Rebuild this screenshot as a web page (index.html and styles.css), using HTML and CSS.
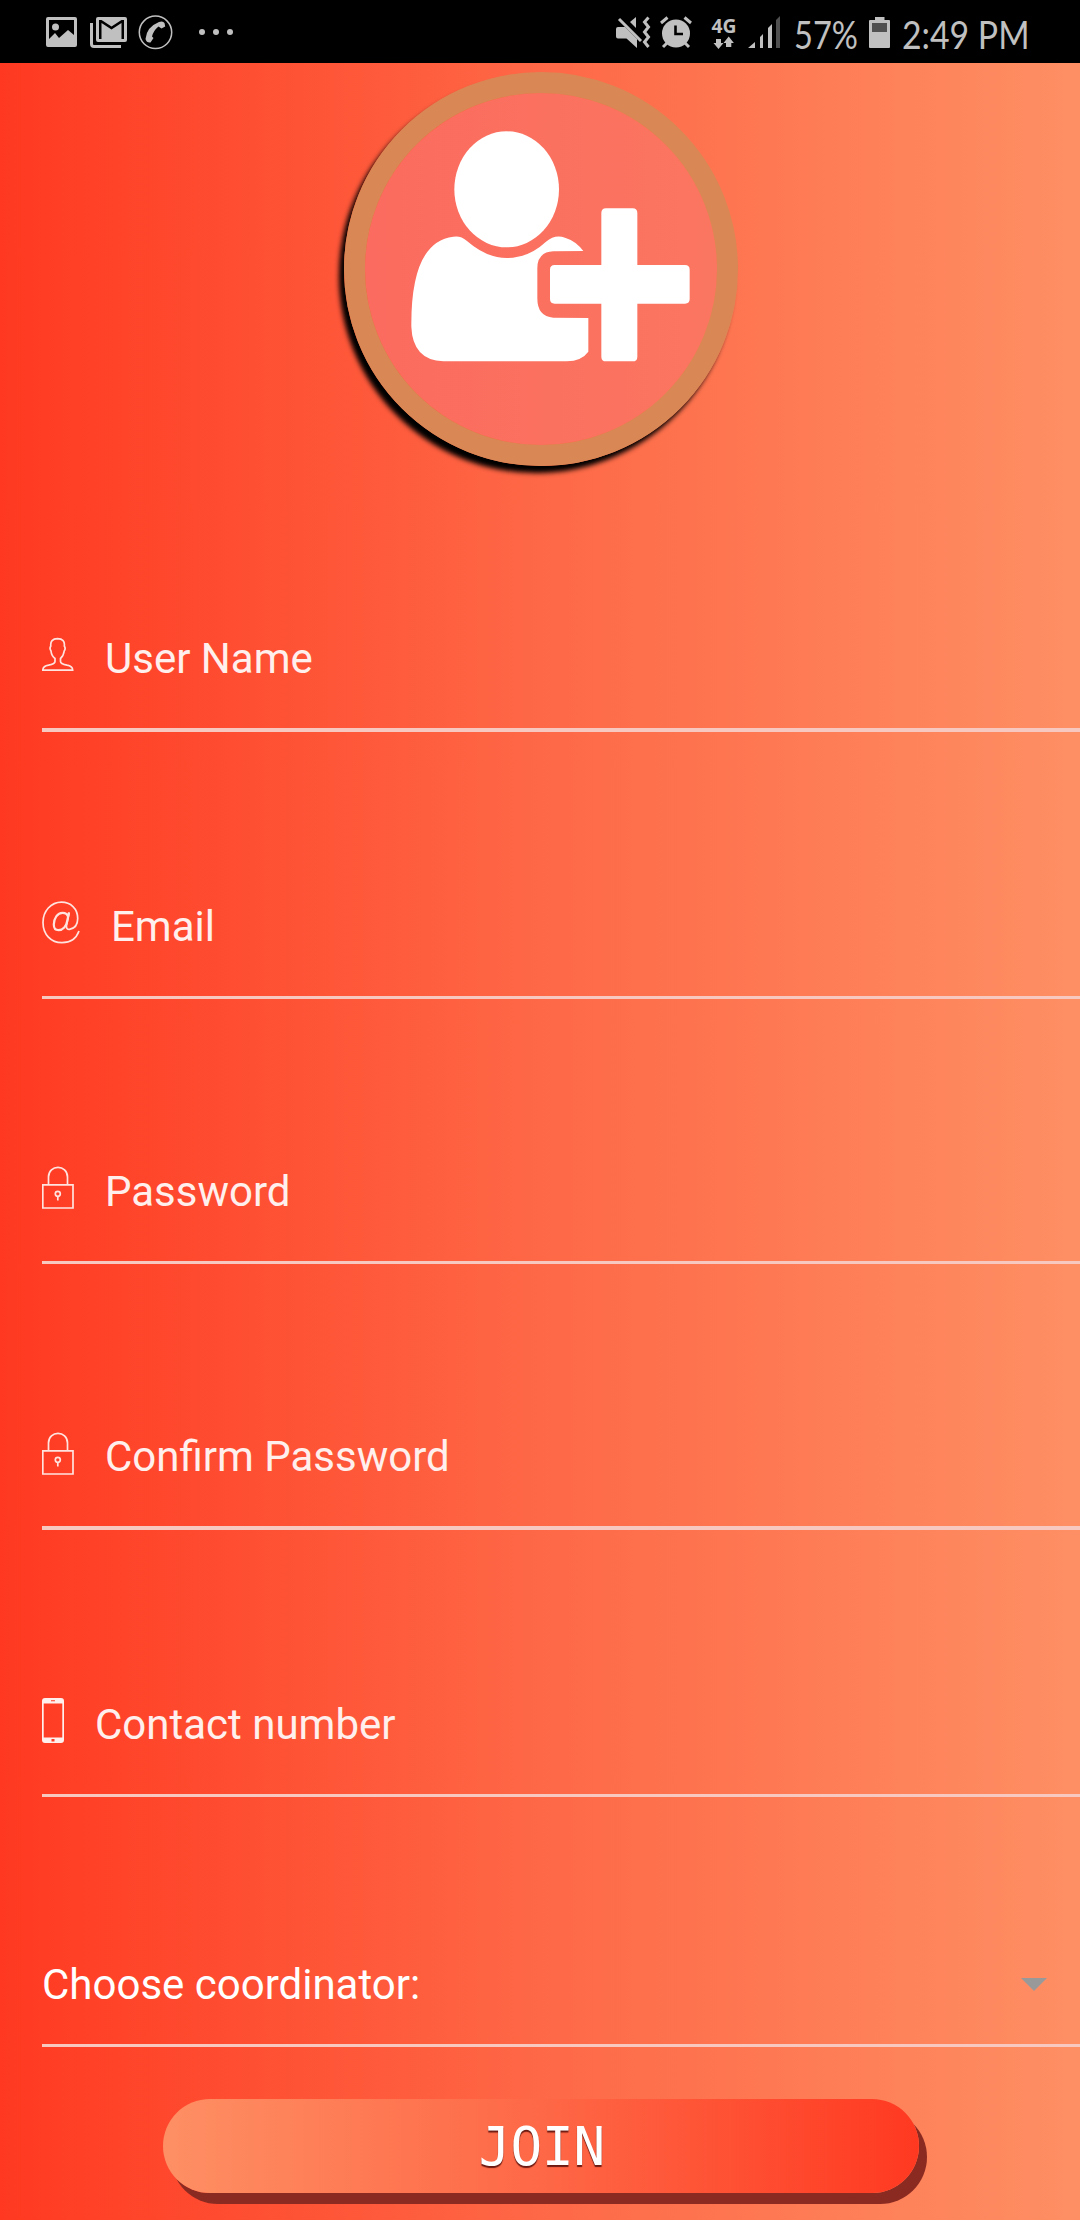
FILE: index.html
```html
<!DOCTYPE html>
<html lang="en">
<head>
<meta charset="utf-8">
<title>Join</title>
<link rel="stylesheet" href="styles.css">
</head>
<body>
<header class="status">
  <div class="status-group">
    <svg class="s-picture" width="31" height="35" viewBox="46 15 31 35"><path fill="#c0c0c0" fill-rule="evenodd" d="M48 17h27q2 0 2 2v26q0 2-2 2H48q-2 0-2-2V19q0-2 2-2zM49 20v19l6-6 4 5 9-8 6 5V20z"/><circle cx="55.500" cy="27" r="3.500" fill="#c0c0c0"/></svg>
    <svg class="s-mail" width="37" height="35" viewBox="90 15 37 35"><path fill="#c0c0c0" fill-rule="evenodd" d="M98 17h27q2 0 2 2v21q0 2-2 2H98q-2 0-2-2V19q0-2 2-2zM99 20v19h2.500V23l10 6.500 10-6.500v16h2.500V20h-2.500l-10 6.500-10-6.500z"/><path fill="#c0c0c0" d="M102 24l9.500 7 9.500-7v15h-19z"/><path d="M91.500 23v21q0 2.500 2.500 2.500h27" fill="none" stroke="#c0c0c0" stroke-width="3"/></svg>
    <svg class="s-phone" width="35" height="35" viewBox="138 15 35 35"><circle cx="155.500" cy="32.300" r="16.200" fill="none" stroke="#c0c0c0" stroke-width="1.500"/><path fill="#c0c0c0" d="M159 22q4-1.500 5.500 1l.7 3.500-3.700 2-3-2q-5 4-6.500 10l1.500 1.500-3 4.500q-4 .5-5-3.500 1-12 13.500-17z"/></svg>
    <svg class="s-dots" width="36" height="35" viewBox="198 15 36 35"><g fill="#c0c0c0"><circle cx="202" cy="32" r="3"/><circle cx="216" cy="32" r="3"/><circle cx="230" cy="32" r="3"/></g></svg>
  </div>
  <div class="status-group">
    <svg class="s-mute" width="34" height="35" viewBox="616 15 34 35"><g fill="#c0c0c0"><path d="M618 27h7l12 12v9l-10.500-9.500H618q-2 0-2-2V29q0-2 2-2z"/><path d="M636 17v11l-6-6z"/></g><g fill="none" stroke="#c0c0c0" stroke-width="3"><path d="M619 19l22 22"/><path d="M648.500 17.500l-4 4.500 4 5-4 5 4 5-4 5 4 5"/></g></svg>
    <svg class="s-alarm" width="32" height="35" viewBox="660 15 32 35"><circle cx="676" cy="33.500" r="14" fill="#c0c0c0"/><g fill="none" stroke="#c0c0c0" stroke-width="3"><path d="M661 23l6.500-5.500M684.500 17.500L691 23M667 43l-4 4M685 43l4 4"/></g><path d="M675.500 25.500v8.500h7.500" fill="none" stroke="#000" stroke-width="2.600"/></svg>
    <svg class="s-net" width="26" height="35" viewBox="711 15 26 35"><text x="711.500" y="32.500" textLength="25" lengthAdjust="spacingAndGlyphs" class="net-text">4G</text><path fill="#c0c0c0" d="M716 39h5v4h2.500l-5 6-5-6h2.500zM726 47v-4h-2.500l5.200-6.500 5.200 6.500h-2.600v4z"/></svg>
    <svg class="s-signal" width="32" height="35" viewBox="748 15 32 35"><g fill="#c0c0c0"><path d="M748 48l7-6v6zM760 37l3-3v14h-3zM768 28l4-4v24h-4z"/><path d="M776 20l4-4v32h-4z" fill="#505050"/></g></svg>
    <svg class="s-percent" width="65" height="48" viewBox="794 15 65 48"><text x="794" y="48.500" textLength="64" lengthAdjust="spacingAndGlyphs" class="status-text">57%</text></svg>
    <svg class="s-battery" width="21" height="35" viewBox="869 15 21 35"><path fill="#c0c0c0" d="M875 17h9.500v3H889q1 0 1 1v26q0 1-1 1h-19q-1 0-1-1V21q0-1 1-1h5z"/><path fill="#505050" d="M872 23h15v9h-15z"/></svg>
    <svg class="s-time" width="128" height="48" viewBox="902 15 128 48"><text x="902" y="48.500" textLength="127.500" lengthAdjust="spacingAndGlyphs" class="status-text">2:49 PM</text></svg>
  </div>
</header>

<main class="screen">
  <div class="avatar">
    <svg width="352" height="352" viewBox="135 99 1056 1056">
      <g fill="#fff">
        <ellipse cx="560" cy="388" rx="157" ry="174"/>
        <path d="M400 530Q422 526 440 542Q500 594 560 594Q625 594 678 545Q705 522 735 533Q768 543 790 573L700 574Q652 576 652 625V715Q652 770 700 773L805 774V875Q785 903 740 904H370Q278 900 274 800Q272 545 400 530Z"/>
        <path d="M858 445h80q14 0 14 14v156h143q14 0 14 14v88q0 14-14 14H952v159q0 14-14 14h-80q-14 0-14-14V731H704q-14 0-14-14v-88q0-14 14-14h140V459q0-14 14-14z"/>
      </g>
    </svg>
  </div>

  <form class="form">
    <label class="field field-tall">
      <svg class="icon" width="32" height="48" viewBox="0 0 32 48"><path d="M.8 38.200Q1 34 6.500 33.200Q13 32 13 29.500V26.500Q9.500 24 9 19Q7.200 16.500 8.800 14Q8 6.800 15.500 6.700Q23.300 6.800 22.300 14Q24 16.500 22.200 19Q21.500 24 18.500 26.500V29.500Q18.500 32 25 33.200Q30.500 34 30.700 38.200Z"/></svg>
      <span class="label">User Name</span>
    </label>
    <label class="field field-email">
      <svg class="icon" width="38" height="48" viewBox="0 0 38 48"><path d="M27.300 13.500L24.500 26.500Q24 30.500 27.500 30.300C33 29.500 35.700 25 35.700 19.500C35.700 9.500 28.500 3.200 19.500 3.200C9 3.200 1 12 1 23.500C1 35.500 9 43.700 20 43.700C28.500 43.700 34.500 39 37 32"/><path stroke-width="2.200" d="M26.200 18Q25.200 13.800 20.500 13.800C15.500 13.800 11.800 19.500 11.800 25.500C11.800 29 13.500 31.200 16.500 31.200C21 31.200 24.500 27 25.200 22L27 13.500"/></svg>
      <span class="label">Email</span>
    </label>
    <label class="field field-password">
      <svg class="icon" width="32" height="48" viewBox="0 0 32 48"><path d="M.8 20.800H31V44H.8zM6.500 20.500V13C6.500 .2 25.500 .2 25.500 13V20.500"/><circle cx="15.800" cy="29.800" r="2.500"/><path d="M15.800 32.500v4"/></svg>
      <span class="label">Password</span>
    </label>
    <label class="field field-tall">
      <svg class="icon" width="32" height="48" viewBox="0 0 32 48"><path d="M.8 20.800H31V44H.8zM6.500 20.500V13C6.500 .2 25.500 .2 25.500 13V20.500"/><circle cx="15.800" cy="29.800" r="2.500"/><path d="M15.800 32.500v4"/></svg>
      <span class="label">Confirm Password</span>
    </label>
    <label class="field field-contact">
      <svg class="icon icon-solid" width="22" height="48" viewBox="0 0 22 48"><path fill-rule="evenodd" d="M3 1h16q3 0 3 3v39q0 3-3 3H3q-3 0-3-3V4q0-3 3-3zM1.700 6.500V40.500H20.300V6.500zM9 3.300v1h4v-1zM9.500 42v2.500h3V42z"/></svg>
      <span class="label">Contact number</span>
    </label>
    <div class="field field-select">
      <span class="label">Choose coordinator:</span>
      <svg class="arrow" width="26" height="13" viewBox="0 0 26 13"><path d="M0 0h26L13 13z"/></svg>
    </div>
    <button class="join" type="button">JOIN</button>
  </form>
</main>
</body>
</html>
```

FILE: styles.css
```css
* { box-sizing: border-box; }

body {
  margin: 0;
  width: 1080px;
  height: 2220px;
  overflow: hidden;
  font-family: Roboto, "Liberation Sans", sans-serif;
}

.status {
  display: flex;
  justify-content: space-between;
  height: 63px;
  padding: 15px 50px 0 46px;
  background: #000;
}
.status-group { display: flex; }
.status svg {
  display: block;
  flex: none;
  overflow: visible;
}
.s-mail { margin-left: 13px; }
.s-phone { margin-left: 11px; }
.s-dots { margin-left: 25px; }
.s-alarm { margin-left: 10px; }
.s-net { margin-left: 19px; }
.s-signal { margin-left: 11px; }
.s-percent { margin-left: 14px; }
.s-battery { margin-left: 10px; }
.s-time { margin-left: 12px; }
.status-text {
  font: 38px Lato, sans-serif;
  fill: #c0c0c0;
}
.net-text {
  font: bold 20px "Open Sans", sans-serif;
  fill: #c0c0c0;
}

.screen {
  height: 2157px;
  padding-top: 9px;
  background: linear-gradient(to right, #ff3921, #fe6846 50%, #fe8f64);
}

.avatar {
  width: 394px;
  height: 394px;
  margin: 0 auto 0 344px;
  border: 21px solid #d98855;
  border-radius: 50%;
  background: linear-gradient(to right, #fb6b5f, #fb7660);
  background-clip: padding-box;
  box-shadow: -5px 7px 5px #000;
}
.avatar svg { display: block; }

.form {
  display: flex;
  flex-direction: column;
}
.field {
  display: flex;
  align-items: flex-end;
  gap: 31px;
  height: 266px;
  margin-left: 42px;
  border-bottom: 3px solid #f7c8bf;
}
.field-tall { border-bottom-width: 4px; }
.field-email { height: 267px; }
.field-password { height: 265px; }
.field-contact { height: 267px; }
.field-select {
  height: 250px;
  justify-content: space-between;
  padding-right: 33px;
}

.icon {
  flex: none;
  margin-bottom: 49px;
  fill: none;
  stroke: #ffe3df;
  stroke-width: 1.7px;
}
.field-tall .icon { margin-bottom: 48px; }
.icon-solid {
  fill: #ffefed;
  stroke: none;
}
.label {
  margin-bottom: 44px;
  font-size: 42px;
  line-height: 50px;
  color: #ffefed;
  white-space: nowrap;
}
.field-select .label {
  margin-bottom: 34px;
  color: #fff;
}
.arrow {
  flex: none;
  margin-bottom: 53px;
  fill: #999;
}

.join {
  width: 756px;
  height: 94px;
  margin: 52px 0 0 163px;
  padding: 1px 0 0 2px;
  border: 0;
  border-radius: 47px;
  background: linear-gradient(to right, #fe8f64, #fe6846 50%, #ff3921);
  box-shadow: 8px 11px 0 #8b2a21;
  color: #fff;
  font: 52.500px/94px "DejaVu Sans Mono", monospace;
  text-shadow: 0 2px 1px #6b1a12;
}
```
